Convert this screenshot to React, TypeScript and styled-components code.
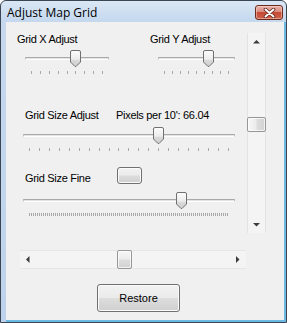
import styled, { createGlobalStyle } from "styled-components";

const GlobalStyle = createGlobalStyle`
  html, body {
    margin: 0;
    padding: 0;
    background: #ffffff;
  }
  body {
    font-family: "Liberation Sans", Arial, sans-serif;
  }
`;

const Window = styled.div`
  width: 287px;
  height: 323px;
  box-sizing: border-box;
  border: 1px solid #3a4654;
  border-radius: 6px 6px 0 0;
  background: linear-gradient(180deg, #dae7f5 0%, #c5d8ee 20px, #bed3eb 100%);
  display: flex;
  flex-direction: column;
  padding-left: 5px;
  overflow: hidden;
`;

const TitleBar = styled.div`
  height: 21px;
  display: flex;
  align-items: center;
  justify-content: space-between;
  padding: 0 3px 0 1px;
`;

const TitleText = styled.span`
  font-family: "Open Sans", "Noto Sans", sans-serif;
  font-size: 12px;
  line-height: 14px;
  padding-top: 2px;
  color: #000;
`;

const CloseButton = styled.div`
  width: 28px;
  height: 15px;
  box-sizing: border-box;
  margin-top: 2px;
  border: 1px solid #6b2a20;
  border-radius: 3px;
  background: linear-gradient(180deg, #eab3aa 0%, #d98a7e 45%, #c54a36 50%, #cf6049 100%);
  box-shadow: inset 0 0 0 1px rgba(255, 220, 210, 0.5);
  display: flex;
  align-items: center;
  justify-content: center;
`;

const Client = styled.div`
  flex: 1;
  background: #f0f0f0;
  border-right: 2px solid #6cb9e3;
  border-bottom: 2px solid #6cb9e3;
  display: flex;
  flex-direction: column;
  font-size: 11px;
  letter-spacing: -0.3px;
  color: #000;
`;

const Upper = styled.div`
  display: flex;
  padding: 11px 0 0 11px;
`;

const Controls = styled.div`
  width: 230px;
  display: flex;
  flex-direction: column;
`;

const PairRow = styled.div`
  display: grid;
  grid-template-columns: 133px 1fr;
`;

const Group = styled.div`
  display: flex;
  flex-direction: column;
`;

const Label = styled.span<{ $mt?: number }>`
  line-height: 13px;
  white-space: nowrap;
  margin-top: ${p => p.$mt ?? 0}px;
`;

const LabelRow = styled.div<{ $mt: number; $col: number }>`
  display: grid;
  grid-template-columns: ${p => p.$col}px auto;
  align-items: start;
  margin-top: ${p => p.$mt}px;
  padding-left: 8px;
`;

const SliderBox = styled.div<{ $w: number; $ml: number; $mt: number }>`
  position: relative;
  width: ${p => p.$w}px;
  margin-left: ${p => p.$ml}px;
  margin-top: ${p => p.$mt}px;
  height: 25px;
  display: flex;
  flex-direction: column;
`;

const Track = styled.div`
  margin-top: 7px;
  height: 3px;
  box-sizing: border-box;
  border-top: 1px solid #a9a9a9;
  border-left: 1px solid #c2c2c2;
  border-right: 1px solid #c2c2c2;
  border-bottom: 1px solid #ffffff;
  background: #e4e4e4;
`;

const Ticks = styled.div`
  margin-top: 11px;
  height: 4px;
  padding: 0 6px;
  display: flex;
  justify-content: space-between;
`;

const Tick = styled.span`
  width: 1px;
  height: 3px;
  background: #a8a8a8;
`;

const DenseTicks = styled.div`
  margin: 11px 6px 0;
  height: 3px;
  background: repeating-linear-gradient(90deg, #a8a8a8 0 1px, transparent 1px 2px);
`;

const ThumbWrap = styled.div`
  position: absolute;
  top: 0;
  width: 11px;
  height: 17px;
`;

const Thumb = () => (
  <svg width="11" height="17" viewBox="0 0 11 17">
    <defs>
      <linearGradient id="thumbFill" x1="0" y1="0" x2="0" y2="1">
        <stop offset="0" stopColor="#fdfdfd" />
        <stop offset="0.55" stopColor="#ececec" />
        <stop offset="0.6" stopColor="#dadada" />
        <stop offset="1" stopColor="#cfcfcf" />
      </linearGradient>
    </defs>
    <path
      d="M2 0.5 H9 Q10.5 0.5 10.5 2 V12 L6 16.5 H5 L0.5 12 V2 Q0.5 0.5 2 0.5 Z"
      fill="url(#thumbFill)"
      stroke="#707070"
      strokeWidth="1"
    />
  </svg>
);

type SliderProps = { width: number; ml: number; mt: number; value: number; ticks?: number; dense?: boolean };

const Slider = ({ width, ml, mt, value, ticks = 9, dense }: SliderProps) => {
  const left = 6 + value * (width - 12) - 5.5;
  return (
    <SliderBox $w={width} $ml={ml} $mt={mt}>
      <Track />
      {dense ? (
        <DenseTicks />
      ) : (
        <Ticks>
          {Array.from({ length: ticks }, (_, i) => (
            <Tick key={i} />
          ))}
        </Ticks>
      )}
      <ThumbWrap style={{ left: Math.round(left) }}>
        <Thumb />
      </ThumbWrap>
    </SliderBox>
  );
};

const WinButton = styled.button<{ $w: number; $h: number }>`
  width: ${p => p.$w}px;
  height: ${p => p.$h}px;
  box-sizing: border-box;
  padding: 0;
  border: 1px solid #707070;
  border-radius: 3px;
  background: linear-gradient(180deg, #f2f2f2 0%, #ebebeb 48%, #dddddd 52%, #cfcfcf 100%);
  box-shadow: inset 0 0 0 1px #fbfbfb;
  font-family: "Liberation Sans", Arial, sans-serif;
  font-size: 11px;
  color: #000;
`;

const VScroll = styled.div`
  width: 19px;
  height: 200px;
  box-sizing: border-box;
  background: #f4f4f4;
  border-left: 1px solid #e3e3e3;
  border-right: 1px solid #e3e3e3;
  display: flex;
  flex-direction: column;
`;

const HScroll = styled.div`
  width: 226px;
  height: 19px;
  margin: 17px 0 0 14px;
  box-sizing: border-box;
  background: #f4f4f4;
  border-top: 1px solid #e6e6e6;
  border-bottom: 1px solid #e6e6e6;
  display: flex;
  align-items: stretch;
`;

const ArrowCell = styled.div<{ $size: number }>`
  flex: 0 0 ${p => p.$size}px;
  display: flex;
  align-items: center;
  justify-content: center;
`;

const Gutter = styled.div`
  flex: 1;
  display: flex;
  flex-direction: inherit;
`;

const VThumb = styled.div<{ $top: number }>`
  margin: ${p => p.$top}px -1px 0;
  height: 15px;
  box-sizing: border-box;
  border: 1px solid #979797;
  border-radius: 2px;
  background: linear-gradient(90deg, #f7f7f7 0%, #ececec 45%, #dcdcdc 55%, #d2d2d2 100%);
  box-shadow: inset 0 0 0 1px rgba(255, 255, 255, 0.7);
`;

const HThumb = styled.div<{ $left: number }>`
  margin: -1px 0 -1px ${p => p.$left}px;
  width: 15px;
  box-sizing: border-box;
  border: 1px solid #979797;
  border-radius: 2px;
  background: linear-gradient(180deg, #f7f7f7 0%, #ececec 45%, #dcdcdc 55%, #d2d2d2 100%);
  box-shadow: inset 0 0 0 1px rgba(255, 255, 255, 0.7);
`;

const Arrow = ({ dir }: { dir: "up" | "down" | "left" | "right" }) => {
  const pts = {
    up: "0,3.5 3.5,0 7,3.5",
    down: "0,0 7,0 3.5,3.5",
    left: "3.5,0 3.5,7 0,3.5",
    right: "0,0 0,7 3.5,3.5",
  }[dir];
  const vertical = dir === "up" || dir === "down";
  return (
    <svg width={vertical ? 7 : 4} height={vertical ? 4 : 7} viewBox={vertical ? "0 0 7 4" : "0 0 4 7"}>
      <polygon points={pts} fill="#3c3c3c" />
    </svg>
  );
};

const Footer = styled.div`
  margin: 15px 0 0 91px;
`;

export default function App() {
  return (
    <>
      <GlobalStyle />
      <Window>
        <TitleBar>
          <TitleText>Adjust Map Grid</TitleText>
          <CloseButton>
            <svg width="13" height="10" viewBox="0 0 13 10">
              <path d="M2.5 1.5 L10.5 8.5 M10.5 1.5 L2.5 8.5" stroke="#5a2219" strokeWidth="3.6" strokeLinecap="round" />
              <path d="M2.5 1.5 L10.5 8.5 M10.5 1.5 L2.5 8.5" stroke="#ffffff" strokeWidth="2" strokeLinecap="round" />
            </svg>
          </CloseButton>
        </TitleBar>
        <Client>
          <Upper>
            <Controls>
              <PairRow>
                <Group>
                  <Label>Grid X Adjust</Label>
                  <Slider width={84} ml={8} mt={4} value={0.618} />
                </Group>
                <Group>
                  <Label>Grid Y Adjust</Label>
                  <Slider width={77} ml={8} mt={4} value={0.69} />
                </Group>
              </PairRow>

              <LabelRow $mt={34} $col={91}>
                <Label>Grid Size Adjust</Label>
                <Label>Pixels per 10': 66.04</Label>
              </LabelRow>
              <Slider width={212} ml={6} mt={5} value={0.645} ticks={21} />

              <LabelRow $mt={15} $col={92}>
                <Label $mt={5}>Grid Size Fine</Label>
                <WinButton $w={25} $h={17} />
              </LabelRow>
              <Slider width={212} ml={6} mt={7} value={0.76} dense />
            </Controls>

            <VScroll>
              <ArrowCell $size={17}>
                <Arrow dir="up" />
              </ArrowCell>
              <Gutter>
                <VThumb $top={67} />
              </Gutter>
              <ArrowCell $size={17}>
                <Arrow dir="down" />
              </ArrowCell>
            </VScroll>
          </Upper>

          <HScroll>
            <ArrowCell $size={16}>
              <Arrow dir="left" />
            </ArrowCell>
            <Gutter>
              <HThumb $left={81} />
            </Gutter>
            <ArrowCell $size={16}>
              <Arrow dir="right" />
            </ArrowCell>
          </HScroll>

          <Footer>
            <WinButton $w={83} $h={28}>Restore</WinButton>
          </Footer>
        </Client>
      </Window>
    </>
  );
}
